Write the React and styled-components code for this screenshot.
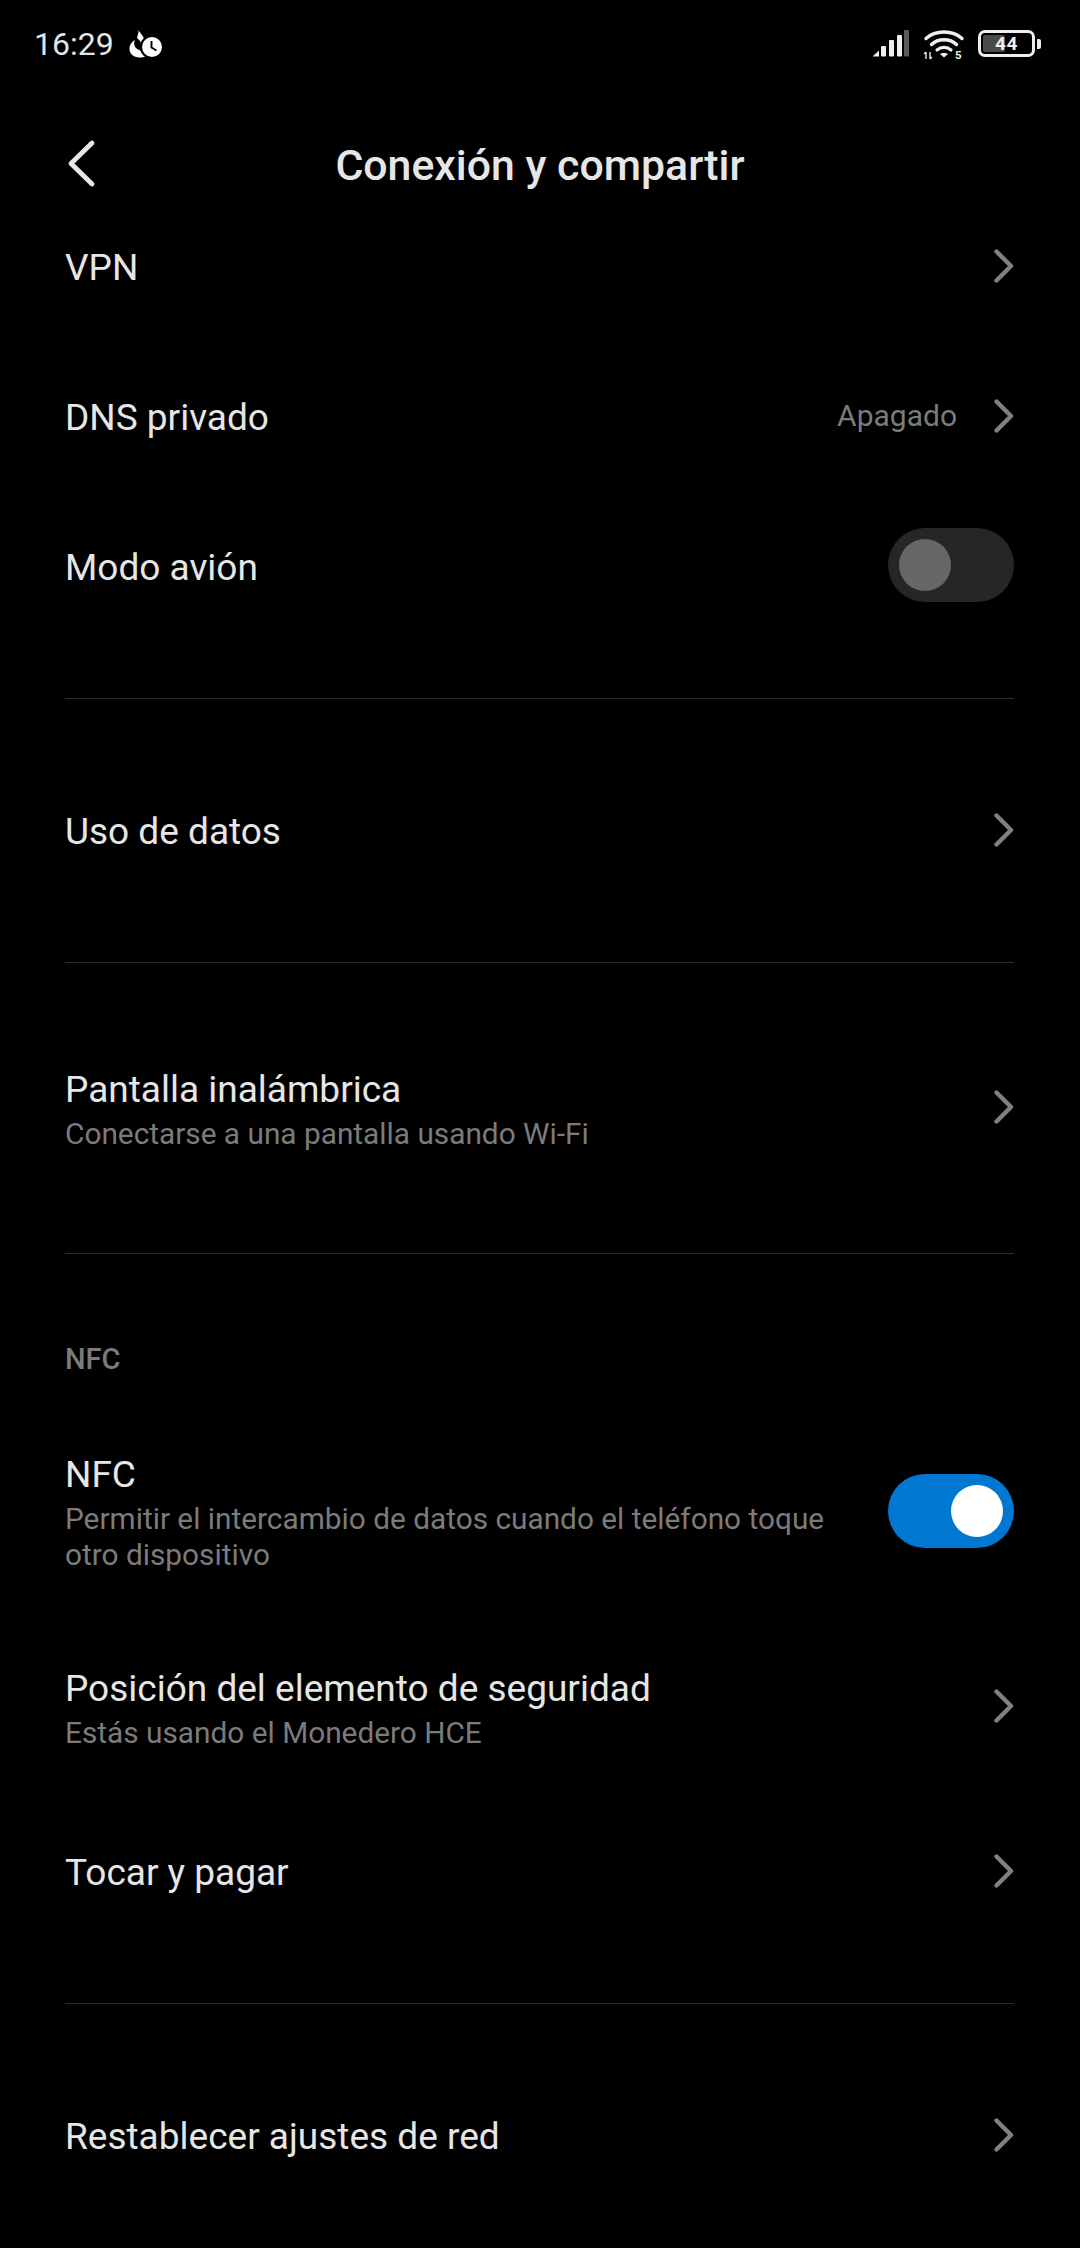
import React from "react";
import styled, { createGlobalStyle } from "styled-components";

const Global = createGlobalStyle`
  html, body { margin: 0; padding: 0; background: #000; }
  body { font-family: Roboto, "Noto Sans", sans-serif; -webkit-font-smoothing: antialiased; }
`;

const Screen = styled.div`
  width: 1080px;
  height: 2248px;
  overflow: hidden;
  background: #000;
  color: #e6e6e6;
`;

const StatusBar = styled.div`
  height: 88px;
  padding: 0 39px 0 34px;
  display: flex;
  align-items: flex-start;
  justify-content: space-between;
`;

const StatusLeft = styled.div`
  display: flex;
  align-items: center;
  gap: 15px;
  height: 88px;
`;

const Clock = styled.span`
  font-size: 32px;
  color: #e4e4e4;
`;

const StatusRight = styled.div`
  display: flex;
  align-items: flex-start;
  gap: 13px;
  padding-top: 30px;
`;

const Header = styled.div`
  height: 104px;
  padding-top: 50px;
  box-sizing: border-box;
  position: relative;
  display: flex;
  align-items: center;
  justify-content: center;
`;

const Title = styled.h1`
  margin: 0;
  font-size: 42.8px;
  font-weight: 500;
  color: #e6e6e6;
`;

const BackIcon = styled.svg`
  position: absolute;
  left: 66px;
  top: 51px;
`;

const List = styled.div`
  display: flex;
  flex-direction: column;
  padding: 0 66px 0 65px;
`;

const Row = styled.div`
  height: ${(p) => p.$h}px;
  display: flex;
  align-items: center;
  justify-content: space-between;
  gap: 40px;
`;

const RowText = styled.div`
  display: flex;
  flex-direction: column;
  min-width: 0;
  padding-top: 2px;
`;

const RowTitle = styled.div`
  font-size: 37px;
  line-height: 48px;
  color: #e6e6e6;
`;

const SingleTitle = styled(RowTitle)`
  padding-top: 2px;
`;

const RowSub = styled.div`
  font-size: 29.8px;
  line-height: 36px;
  color: #7b7b7b;
  margin-top: 2px;
`;

const RowRight = styled.div`
  display: flex;
  align-items: center;
  gap: 37px;
  flex-shrink: 0;
`;

const Value = styled.span`
  font-size: 30px;
  color: #7b7b7b;
  margin-top: -3px;
`;

const Divider = styled.div`
  height: 1px;
  background: #2a2a2a;
  margin: ${(p) => p.$top}px 0 ${(p) => p.$bottom}px;
`;

const SectionLabel = styled.div`
  font-size: 29px;
  font-weight: 500;
  color: #7b7b7b;
  line-height: 36px;
  margin-bottom: 29px;
`;

const Track = styled.div`
  width: 126px;
  height: 74px;
  border-radius: 37px;
  background: ${(p) => (p.$on ? "#0078d2" : "#262626")};
  display: flex;
  align-items: center;
  justify-content: ${(p) => (p.$on ? "flex-end" : "flex-start")};
  padding: 0 11px;
  margin-top: ${(p) => (p.$on ? 0 : -4)}px;
  box-sizing: border-box;
  flex-shrink: 0;
`;

const Knob = styled.div`
  width: 52px;
  height: 52px;
  border-radius: 50%;
  background: ${(p) => (p.$on ? "#fff" : "#666")};
`;

const ChevronSvg = styled.svg`
  display: block;
  flex-shrink: 0;
  margin-top: -2px;
`;

const Chevron = () => (
  <ChevronSvg width="20" height="34" viewBox="0 0 20 34" fill="none">
    <path d="M2.5 2.5 L17 17 L2.5 31.5" stroke="#808080" strokeWidth="4.4" strokeLinecap="round" strokeLinejoin="round" />
  </ChevronSvg>
);

const Switch = ({ on }) => (
  <Track $on={on}>
    <Knob $on={on} />
  </Track>
);

const DndIcon = () => (
  <svg width="34" height="30" viewBox="0 0 34 30">
    <path d="M9.5 0.5 C10 4 15.5 6.5 15.5 12.5 C15.5 14.5 14 16 12 16 C12.5 12.5 10 11 8 9 C8.5 6 10 3.5 9.5 0.5 Z" fill="#fff" />
    <path d="M6 11 C5 13 4.5 16 6.5 18.5 C8.5 21 12 21 13 24 C13.5 25.5 15 26.5 17 27.5 C15.5 28 13 28.5 10.5 28.5 C4.5 28.5 0.5 24.5 0.5 20 C0.5 16 3 12.5 6 11 Z" fill="#fff" />
    <circle cx="23" cy="18" r="12" fill="#000" />
    <circle cx="23" cy="18" r="10" fill="#fff" />
    <path d="M22.5 12 V18.5 L27.5 21.5" stroke="#000" strokeWidth="1.9" fill="none" />
  </svg>
);

const SignalIcon = () => (
  <svg width="38" height="27" viewBox="0 0 38 27">
    <path d="M0.5 26.5 L7 20.5 V26.5 Z" fill="#eee" />
    <rect x="9" y="16" width="5" height="10.5" rx="1" fill="#eee" />
    <rect x="17" y="10" width="5" height="16.5" rx="1" fill="#eee" />
    <rect x="25" y="5" width="5" height="21.5" rx="1" fill="#eee" />
    <rect x="32" y="0" width="5" height="26.5" rx="1" fill="#5a5a5a" />
  </svg>
);

const WifiSvg = styled.svg`
  overflow: visible;
  display: block;
`;

const WifiLabel = styled.text`
  font-family: Roboto, sans-serif;
  font-size: 11.5px;
  font-weight: 700;
  fill: #eee;
`;

const WifiIcon = () => (
  <WifiSvg width="42" height="34" viewBox="0 0 42 34" fill="none">
    <path d="M3 8.5 C12 -0.2 30 -0.2 39 8.5" stroke="#eee" strokeWidth="3.4" strokeLinecap="round" />
    <path d="M8.5 14.5 C15 8.2 27 8.2 33.5 14.5" stroke="#eee" strokeWidth="3.4" strokeLinecap="round" />
    <path d="M14 20 C18 16.6 24 16.6 28 20" stroke="#eee" strokeWidth="3.2" strokeLinecap="round" />
    <path d="M17 24 C19 22.6 23 22.6 25 24 L21 27.5 Z" fill="#eee" />
    <path d="M3 29 V22 M1 24 L3 22 M7 22 V29 M7 29 L9 27" stroke="#ddd" strokeWidth="1.5" />
    <WifiLabel x="32" y="29">5</WifiLabel>
  </WifiSvg>
);

const BatteryWrap = styled.div`
  display: flex;
  align-items: center;
  gap: 2px;
`;

const BatteryBody = styled.div`
  position: relative;
  width: 57px;
  height: 27px;
  border: 3px solid #eee;
  border-radius: 7px;
  box-sizing: border-box;
  display: flex;
  align-items: center;
  justify-content: center;
`;

const BatteryFill = styled.div`
  position: absolute;
  left: 2px;
  top: 2px;
  bottom: 2px;
  width: 44%;
  background: #4a4a4a;
  border-radius: 2px;
`;

const BatteryText = styled.span`
  position: relative;
  font-size: 19px;
  line-height: 21px;
  font-weight: 700;
  color: #eee;
  letter-spacing: 0.5px;
`;

const BatteryCap = styled.div`
  width: 4px;
  height: 10px;
  background: #eee;
  border-radius: 0 2px 2px 0;
`;

export default function App() {
  return (
    <Screen>
      <Global />
      <StatusBar>
        <StatusLeft>
          <Clock>16:29</Clock>
          <DndIcon />
        </StatusLeft>
        <StatusRight>
          <SignalIcon />
          <WifiIcon />
          <BatteryWrap>
            <BatteryBody>
              <BatteryFill />
              <BatteryText>44</BatteryText>
            </BatteryBody>
            <BatteryCap />
          </BatteryWrap>
        </StatusRight>
      </StatusBar>
      <Header>
        <BackIcon width="30" height="50" viewBox="0 0 30 50" fill="none">
          <path d="M26 4 L5 24.5 L26 45" stroke="#e6e6e6" strokeWidth="4.8" strokeLinecap="round" strokeLinejoin="round" />
        </BackIcon>
        <Title>Conexión y compartir</Title>
      </Header>
      <List>
        <Row $h={150}>
          <SingleTitle>VPN</SingleTitle>
          <Chevron />
        </Row>
        <Row $h={150}>
          <SingleTitle>DNS privado</SingleTitle>
          <RowRight>
            <Value>Apagado</Value>
            <Chevron />
          </RowRight>
        </Row>
        <Row $h={150}>
          <SingleTitle>Modo avión</SingleTitle>
          <Switch />
        </Row>
        <Divider $top={56} $bottom={57} />
        <Row $h={150}>
          <SingleTitle>Uso de datos</SingleTitle>
          <Chevron />
        </Row>
        <Divider $top={56} $bottom={56} />
        <Row $h={178}>
          <RowText>
            <RowTitle>Pantalla inalámbrica</RowTitle>
            <RowSub>Conectarse a una pantalla usando Wi-Fi</RowSub>
          </RowText>
          <Chevron />
        </Row>
        <Divider $top={56} $bottom={87} />
        <SectionLabel>NFC</SectionLabel>
        <Row $h={210}>
          <RowText>
            <RowTitle>NFC</RowTitle>
            <RowSub>Permitir el intercambio de datos cuando el teléfono toque otro dispositivo</RowSub>
          </RowText>
          <Switch on />
        </Row>
        <Row $h={181}>
          <RowText>
            <RowTitle>Posición del elemento de seguridad</RowTitle>
            <RowSub>Estás usando el Monedero HCE</RowSub>
          </RowText>
          <Chevron />
        </Row>
        <Row $h={150}>
          <SingleTitle>Tocar y pagar</SingleTitle>
          <Chevron />
        </Row>
        <Divider $top={56} $bottom={57} />
        <Row $h={150}>
          <SingleTitle>Restablecer ajustes de red</SingleTitle>
          <Chevron />
        </Row>
      </List>
    </Screen>
  );
}
